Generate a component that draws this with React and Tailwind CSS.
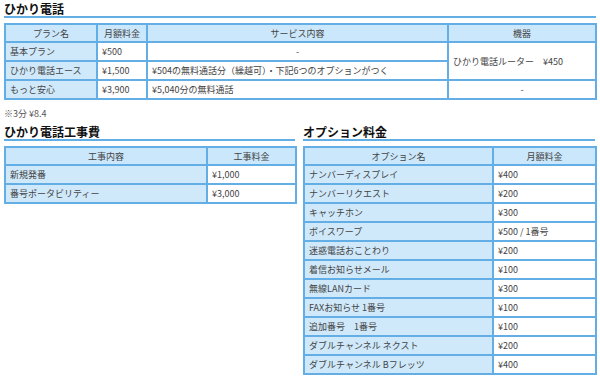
import React from 'react';

const font = { fontFamily: '"Hiragino Kaku Gothic ProN", "Noto Sans CJK JP", sans-serif' };

const plans = [
  { name: '基本プラン', price: '¥500', service: '-', center: true },
  { name: 'ひかり電話エース', price: '¥1,500', service: '¥504の無料通話分（繰越可）・下記6つのオプションがつく' },
  { name: 'もっと安心', price: '¥3,900', service: '¥5,040分の無料通話' },
];

const works = [
  { name: '新規発番', price: '¥1,000' },
  { name: '番号ポータビリティー', price: '¥3,000' },
];

const options = [
  { name: 'ナンバーディスプレイ', price: '¥400' },
  { name: 'ナンバーリクエスト', price: '¥200' },
  { name: 'キャッチホン', price: '¥300' },
  { name: 'ボイスワープ', price: '¥500 / 1番号' },
  { name: '迷惑電話おことわり', price: '¥200' },
  { name: '着信お知らせメール', price: '¥100' },
  { name: '無線LANカード', price: '¥300' },
  { name: 'FAXお知らせ 1番号', price: '¥100' },
  { name: '追加番号　1番号', price: '¥100' },
  { name: 'ダブルチャンネル ネクスト', price: '¥200' },
  { name: 'ダブルチャンネル Bフレッツ', price: '¥400' },
];

const th = 'border-2 border-[#64aee6] bg-[#cbe7fb] font-normal text-center px-1 leading-none';
const tdHead = 'border-2 border-[#64aee6] bg-[#cfe9fb] text-left px-[4px] leading-none';
const td = 'border-2 border-[#64aee6] bg-white text-left px-[4px] leading-none';
const tdCenter = 'border-2 border-[#64aee6] bg-white text-center px-[4px] leading-none';

function Heading({ children }) {
  return (
    <h2 className="text-[12px] font-bold text-[#111] leading-[13px] pb-[1px] border-b-2 border-[#64aee6]">
      {children}
    </h2>
  );
}

export default function App() {
  return (
    <div className="w-[600px] h-[378px] overflow-hidden bg-white px-[4px] pt-[2px] text-[9px] text-[#444]" style={font}>
      {/* ひかり電話 */}
      <Heading>ひかり電話</Heading>
      <table className="mt-[5px] w-[591px] border-collapse table-fixed">
        <colgroup>
          <col className="w-[92px]" />
          <col className="w-[50px]" />
          <col className="w-[301px]" />
          <col className="w-[148px]" />
        </colgroup>
        <thead>
          <tr className="h-[18px]">
            <th className={th}>プラン名</th>
            <th className={th}>月額料金</th>
            <th className={th}>サービス内容</th>
            <th className={th}>機器</th>
          </tr>
        </thead>
        <tbody>
          {plans.map((p, i) => (
            <tr key={p.name} className="h-[19px]">
              <td className={tdHead}>{p.name}</td>
              <td className={td}>{p.price}</td>
              <td className={p.center ? tdCenter : td}>{p.service}</td>
              {i === 0 && (
                <td rowSpan={2} className={td}>ひかり電話ルーター　¥450</td>
              )}
              {i === 2 && <td className={tdCenter}>-</td>}
            </tr>
          ))}
        </tbody>
      </table>
      <p className="mt-[8px] text-[9px] leading-[11px] text-[#555]">※3分 ¥8.4</p>

      <div className="mt-[6px] flex gap-[8px]">
        {/* ひかり電話工事費 */}
        <div className="w-[291px]">
          <Heading>ひかり電話工事費</Heading>
          <table className="mt-[5px] w-full border-collapse table-fixed">
            <colgroup>
              <col className="w-[202px]" />
              <col className="w-[89px]" />
            </colgroup>
            <thead>
              <tr className="h-[18px]">
                <th className={th}>工事内容</th>
                <th className={th}>工事料金</th>
              </tr>
            </thead>
            <tbody>
              {works.map((w) => (
                <tr key={w.name} className="h-[19px]">
                  <td className={tdHead}>{w.name}</td>
                  <td className={td}>{w.price}</td>
                </tr>
              ))}
            </tbody>
          </table>
        </div>

        {/* オプション料金 */}
        <div className="w-[292px]">
          <Heading>オプション料金</Heading>
          <table className="mt-[5px] w-full border-collapse table-fixed">
            <colgroup>
              <col className="w-[189px]" />
              <col className="w-[103px]" />
            </colgroup>
            <thead>
              <tr className="h-[18px]">
                <th className={th}>オプション名</th>
                <th className={th}>月額料金</th>
              </tr>
            </thead>
            <tbody>
              {options.map((o) => (
                <tr key={o.name} className="h-[19px]">
                  <td className={tdHead}>{o.name}</td>
                  <td className={td}>{o.price}</td>
                </tr>
              ))}
            </tbody>
          </table>
        </div>
      </div>
    </div>
  );
}
